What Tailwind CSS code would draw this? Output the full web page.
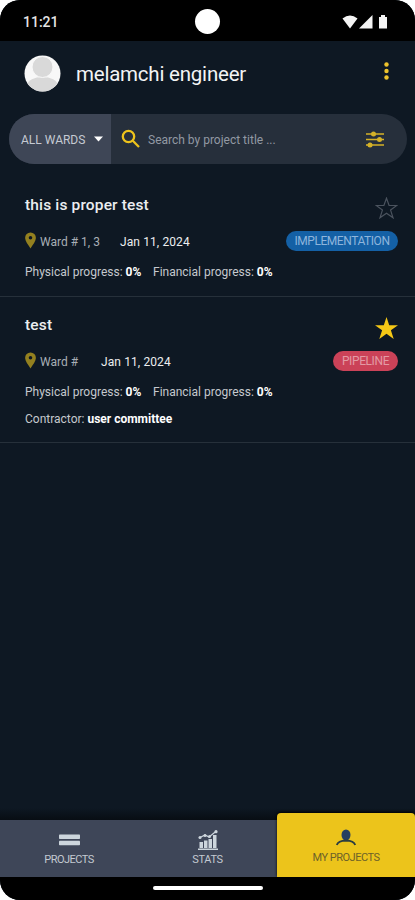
<!DOCTYPE html>
<html lang="en">
<head>
<meta charset="utf-8">
<title>My Projects</title>
<script src="https://cdn.jsdelivr.net/npm/@tailwindcss/browser@4"></script>
</head>
<body class="bg-white">
<div class="w-[415px] h-[900px] rounded-[20px] overflow-hidden bg-[#0e1823] flex flex-col font-[Roboto,sans-serif] text-[#c5c9ce] whitespace-nowrap">
  <div class="relative h-[41px] shrink-0 bg-black flex items-center justify-between pl-[23px] pr-[27px] text-[#e4e4e4]">
    <span class="text-[14px] font-medium leading-[20px] pt-[2px]">11:21</span>
    <span class="absolute left-[195px] top-[9px] size-[25px] rounded-full bg-white"></span>
    <svg class="w-[46px] h-[16px] mt-[2px]" viewBox="0 0 46 16" fill="#f4f4f4"><path d="M0.5 4.5Q8 -1.5 15.5 4.5L8 14.5Z"/><path d="M30.5 1V14.5H17Z"/><path d="M37 3h2V1h4v2h2v11.500h-8z"/></svg>
  </div>

  <header class="h-[73px] shrink-0 flex items-center pl-[24px] pr-[26px] pb-[9px]">
    <svg class="size-[37px]" viewBox="0 0 37 37"><defs><clipPath id="face"><circle cx="18.500" cy="18.500" r="18"/></clipPath></defs><g clip-path="url(#face)"><rect width="37" height="37" fill="#f8f8f8"/><ellipse cx="18.500" cy="30" rx="15" ry="8" fill="#d9d9d9"/><circle cx="18.500" cy="12" r="10.500" fill="#d9d9d9" stroke="#f8f8f8" stroke-width="1"/></g></svg>
    <h1 class="ml-[15px] mt-[2px] text-[20.5px] tracking-[-0.22px] leading-[26px] text-[#f3f4f5] w-[180px]">melamchi engineer</h1>
    <svg class="ml-auto w-[5px] h-[18px] mb-[5px]" viewBox="0 0 5 18" fill="#edc32c"><circle cx="2.500" cy="2.500" r="2.200"/><circle cx="2.500" cy="9" r="2.200"/><circle cx="2.500" cy="15.500" r="2.200"/></svg>
  </header>

  <div class="mx-[9px] mr-[8px] h-[50px] shrink-0 rounded-full overflow-hidden bg-[#262f3b] flex items-center">
    <div class="w-[102px] h-full bg-[#3e4656] flex items-center pl-[12px]">
      <span class="text-[12px] text-[#c5cad2] w-[73px] pt-[2px]">ALL WARDS</span>
      <svg class="w-[9px] h-[6px]" viewBox="0 0 9 6"><path d="M0 .5h9L4.500 5.500Z" fill="#fff"/></svg>
    </div>
    <svg class="ml-[10px] size-[20px]" viewBox="0 0 20 20" fill="none" stroke="#edc31c" stroke-width="2.300"><circle cx="7.500" cy="7.500" r="5.700"/><path d="M11.800 11.800L18 18"/></svg>
    <span class="ml-[7px] pt-[2px] text-[12px] text-[#9299a3]">Search by project title ...</span>
    <svg class="ml-auto mr-[22px] w-[20px] h-[18px]" viewBox="0 0 20 18" stroke="#d5b228" stroke-width="1.600" fill="#d5b228"><path d="M1 4H19M1 9.500H19M1 15H19"/><g stroke="none"><circle cx="8.500" cy="4" r="2.500"/><circle cx="14.500" cy="9.500" r="2.500"/><circle cx="5" cy="15" r="2.500"/></g></svg>
  </div>

  <main class="flex-1 pt-[13px]">
    <article class="h-[120px] border-b border-[#26303a] pl-[25px] pr-[17px] pt-[16px]">
      <div class="flex justify-between h-[37px]">
        <h2 class="text-[15.5px] tracking-[0.15px] font-medium leading-[24px] text-[#eceef0]">this is proper test</h2>
        <svg class="w-[23px] h-[23px] mt-[4px]" viewBox="0 0 23 23"><path d="M11.500 1.200L14.100 8.500H21.800L15.600 13.100L18 20.800L11.500 16.200L5 20.800L7.400 13.100L1.200 8.500H8.900Z" fill="none" stroke="#4b535e" stroke-width="1.200"/></svg>
      </div>
      <div class="flex items-center h-[21px]">
        <svg class="w-[11px] h-[17px]" viewBox="0 0 11 17"><path fill-rule="evenodd" d="M5.500 .5A5.400 5.400 0 0 0 .1 6C.1 9 3 12.500 5.500 16.500C8 12.500 10.900 9 10.900 6A5.400 5.400 0 0 0 5.500 .5ZM5.500 4a1.800 1.800 0 1 1 0 3.600a1.800 1.800 0 1 1 0-3.600Z" fill="#93801f"/></svg>
        <span class="ml-[4px] w-[80px] pt-[2px] text-[12px] text-[#a9afb6]">Ward # 1, 3</span>
        <span class="pt-[2px] text-[12px] tracking-[0.1px] text-[#eceef0]">Jan 11, 2024</span>
        <span class="ml-auto w-[112px] h-[20px] rounded-full bg-[#1460a5] flex items-center justify-center pt-px text-[12px] tracking-[-0.45px] text-[#8eb5dc]">IMPLEMENTATION</span>
      </div>
      <div class="flex mt-[12px] text-[12px] leading-[18px]">
        <span class="w-[128px]">Physical progress: <b class="text-white">0%</b></span>
        <span>Financial progress: <b class="text-white">0%</b></span>
      </div>
    </article>

    <article class="h-[146px] border-b border-[#26303a] pl-[25px] pr-[17px] pt-[16px]">
      <div class="flex justify-between h-[37px]">
        <h2 class="text-[15.5px] tracking-[0.15px] font-medium leading-[24px] text-[#eceef0]">test</h2>
        <svg class="w-[23px] h-[23px] mt-[4px]" viewBox="0 0 23 23"><path d="M11.500 0L14.200 8.200H23L15.900 13.200L18.700 22L11.500 16.700L4.300 22L7.100 13.200L0 8.200H8.800Z" fill="#f5c816"/></svg>
      </div>
      <div class="flex items-center h-[21px]">
        <svg class="w-[11px] h-[17px]" viewBox="0 0 11 17"><path fill-rule="evenodd" d="M5.500 .5A5.400 5.400 0 0 0 .1 6C.1 9 3 12.500 5.500 16.500C8 12.500 10.900 9 10.900 6A5.400 5.400 0 0 0 5.500 .5ZM5.500 4a1.800 1.800 0 1 1 0 3.600a1.800 1.800 0 1 1 0-3.600Z" fill="#93801f"/></svg>
        <span class="ml-[4px] w-[61px] pt-[2px] text-[12px] text-[#a9afb6]">Ward #</span>
        <span class="pt-[2px] text-[12px] tracking-[0.1px] text-[#eceef0]">Jan 11, 2024</span>
        <span class="ml-auto w-[65px] h-[20px] rounded-full bg-[#cb4258] flex items-center justify-center pt-px text-[12px] tracking-[-0.4px] text-[#e39aa5]">PIPELINE</span>
      </div>
      <div class="flex mt-[12px] text-[12px] leading-[18px]">
        <span class="w-[128px]">Physical progress: <b class="text-white">0%</b></span>
        <span>Financial progress: <b class="text-white">0%</b></span>
      </div>
      <p class="mt-[9px] text-[12px] leading-[18px]">Contractor: <b class="text-white">user committee</b></p>
    </article>
  </main>

  <div class="h-[12px] shrink-0 bg-linear-to-b from-[#0e1823] to-[#080d13]"></div>
  <nav class="h-[57px] shrink-0 bg-[#3e4658] flex items-end text-[11px] tracking-[-0.5px] text-[#c3c9d1]">
    <div class="w-[138px] h-[57px] flex flex-col items-center pt-[14px]">
      <svg class="w-[21px] h-[12px]" viewBox="0 0 21 12" fill="#ccd5dc"><rect y="0.500" width="21" height="4.500" rx=".7"/><rect y="6.700" width="21" height="4.500" rx=".7"/></svg>
      <span class="mt-[6px] leading-[16px]">PROJECTS</span>
    </div>
    <div class="w-[139px] h-[57px] flex flex-col items-center pt-[10px]">
      <svg class="w-[20px] h-[20px]" viewBox="0 0 20 20" fill="#ccd5dc"><path d="M0 18.500h20v1.500H0zM1.500 12h3.500v6h-3.500zM6 10.500h3.500v7.500H6zM10.500 9h3.500v9h-3.500zM15 5h3.500v13H15z"/><path d="M1 8L7 5L11 7L18.500 1" fill="none" stroke="#ccd5dc" stroke-width="1.300"/><circle cx="2" cy="7.500" r="1.500"/><circle cx="7" cy="5.500" r="1.500"/><circle cx="11.500" cy="6.500" r="1.500"/><circle cx="18" cy="1.700" r="1.600"/></svg>
      <span class="mt-[2px] leading-[16px] tracking-[-0.3px]">STATS</span>
    </div>
    <div class="w-[138px] h-[64px] rounded-t-[4px] bg-[#ecc41b] shadow-[0_-1px_3px_#000] flex flex-col items-center pt-[16px] text-[#6d6229]">
      <svg class="w-[20px] h-[17px]" viewBox="0 0 20 17"><ellipse cx="10" cy="6" rx="4.500" ry="5.500" fill="#263f60"/><path d="M.8 16Q2 11.800 10 11.500Q18 11.800 19.200 16" fill="none" stroke="#2b3d41" stroke-width="1.800"/></svg>
      <span class="mt-[4px] leading-[16px]">MY PROJECTS</span>
    </div>
  </nav>
  <div class="h-[23px] shrink-0 bg-black flex justify-center pt-[9px]"><span class="w-[110px] h-[4px] rounded-full bg-white"></span></div>
</div>
</body>
</html>
